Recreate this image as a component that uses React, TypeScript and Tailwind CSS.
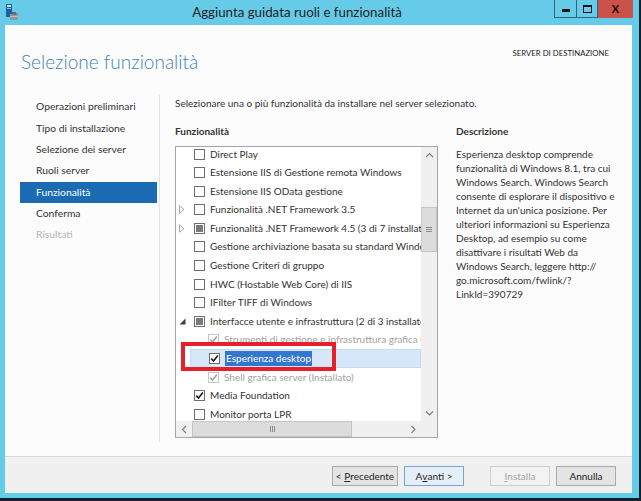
import React from "react";

type Row = {
  label: string;
  level: 0 | 1;
  state: "off" | "on" | "mixed";
  expander?: "closed" | "open";
  muted?: boolean;
  selected?: boolean;
};

const steps = [
  { label: "Operazioni preliminari" },
  { label: "Tipo di installazione" },
  { label: "Selezione dei server" },
  { label: "Ruoli server" },
  { label: "Funzionalità", active: true },
  { label: "Conferma" },
  { label: "Risultati", disabled: true },
];

const rows: Row[] = [
  { label: "Direct Play", level: 0, state: "off" },
  { label: "Estensione IIS di Gestione remota Windows", level: 0, state: "off" },
  { label: "Estensione IIS OData gestione", level: 0, state: "off" },
  { label: "Funzionalità .NET Framework 3.5", level: 0, state: "off", expander: "closed" },
  { label: "Funzionalità .NET Framework 4.5 (3 di 7 installato/i)", level: 0, state: "mixed", expander: "closed" },
  { label: "Gestione archiviazione basata su standard Windows", level: 0, state: "off" },
  { label: "Gestione Criteri di gruppo", level: 0, state: "off" },
  { label: "HWC (Hostable Web Core) di IIS", level: 0, state: "off" },
  { label: "IFilter TIFF di Windows", level: 0, state: "off" },
  { label: "Interfacce utente e infrastruttura (2 di 3 installato/i)", level: 0, state: "mixed", expander: "open" },
  { label: "Strumenti di gestione e infrastruttura grafica (Installato)", level: 1, state: "on", muted: true },
  { label: "Esperienza desktop", level: 1, state: "on", selected: true },
  { label: "Shell grafica server (Installato)", level: 1, state: "on", muted: true },
  { label: "Media Foundation", level: 0, state: "on" },
  { label: "Monitor porta LPR", level: 0, state: "off" },
];

const description = [
  "Esperienza desktop comprende",
  "funzionalità di Windows 8.1, tra cui",
  "Windows Search. Windows Search",
  "consente di esplorare il dispositivo e",
  "Internet da un'unica posizione. Per",
  "ulteriori informazioni su Esperienza",
  "Desktop, ad esempio su come",
  "disattivare i risultati Web da",
  "Windows Search, leggere http://",
  "go.microsoft.com/fwlink/?",
  "LinkId=390729",
];

function AppIcon() {
  return (
    <svg width="14" height="18" viewBox="0 0 14 18" className="shrink-0">
      <rect x="1" y="1" width="6" height="13" fill="#1f5fa6" />
      <rect x="2" y="2" width="4" height="2" fill="#cfe6f7" />
      <rect x="2" y="5" width="4" height="1" fill="#8fc1e8" />
      <path d="M7 10h6v7H5v-5h2z" fill="#7d8790" />
      <rect x="5" y="11" width="8" height="6" fill="#8e989f" />
      <rect x="7.5" y="9.5" width="3" height="1.5" fill="none" stroke="#5d666c" strokeWidth="1" />
      <rect x="5" y="13" width="8" height="1" fill="#b7bec3" />
    </svg>
  );
}

function TitleBar() {
  return (
    <div className="flex h-[25px] items-start">
      <div className="pl-[5px] pt-[3px] w-[40px]">
        <AppIcon />
      </div>
      <div className="flex-1 pt-[4px] text-center text-[13.3px] leading-[16px] text-[#1e1e1e]">
        Aggiunta guidata ruoli e funzionalità
      </div>
      <div className="flex h-[18px] mr-[6px]">
        <div className="flex w-[23px] items-end justify-center border border-t-0 border-[#2f6479] pb-[5px]">
          <div className="h-[3px] w-[8px] bg-[#111]" />
        </div>
        <div className="flex w-[21px] items-center justify-center border border-t-0 border-l-0 border-[#2f6479]">
          <div className="h-[8px] w-[9px] border border-t-[2.5px] border-[#111]" />
        </div>
        <div className="flex w-[35px] items-center justify-center bg-[#c9534b] text-[11px] font-bold text-[#1a0a08]">
          X
        </div>
      </div>
    </div>
  );
}

function CheckBox({ state, muted }: { state: Row["state"]; muted?: boolean }) {
  return (
    <div
      className={`relative flex h-[11px] w-[11px] shrink-0 items-center justify-center border bg-white ${
        muted ? "border-[#c4c4c4]" : "border-[#6e6e6e]"
      }`}
    >
      {state === "mixed" && <div className="h-[7px] w-[7px] bg-[#7a7a7a]" />}
      {state === "on" && (
        <svg width="9" height="9" viewBox="0 0 9 9">
          <path
            d="M1.2 4.6 L3.5 7 L7.9 1.4"
            fill="none"
            stroke={muted ? "#a3a3a3" : "#1b1b1b"}
            strokeWidth="1.6"
          />
        </svg>
      )}
    </div>
  );
}

function Expander({ kind }: { kind?: Row["expander"] }) {
  return (
    <div className="flex w-[18px] shrink-0 items-center pl-[3px]">
      {kind === "closed" && (
        <svg width="6" height="9" viewBox="0 0 6 9">
          <path d="M0.5 0.8 L5 4.5 L0.5 8.2 Z" fill="none" stroke="#a6a6a6" strokeWidth="1" />
        </svg>
      )}
      {kind === "open" && (
        <svg width="7" height="7" viewBox="0 0 7 7">
          <path d="M6.5 0.5 L6.5 6.5 L0.5 6.5 Z" fill="#3e3e3e" />
        </svg>
      )}
    </div>
  );
}

function TreeRow({ row }: { row: Row }) {
  return (
    <div className={`flex h-[18.6px] shrink-0 items-center whitespace-nowrap ${row.level === 1 ? "pl-[14px]" : ""}`}>
      <div
        className={`flex h-full flex-1 items-center ${
          row.selected ? "bg-[#d5e7f8] border border-[#c3dcf2]" : ""
        }`}
      >
        <Expander kind={row.expander} />
        <CheckBox state={row.state} muted={row.muted} />
        <span
          className={`ml-[5px] ${
            row.muted ? "text-[#a2a2a2]" : "text-[#333]"
          } ${row.selected ? "bg-[#3277cf] px-px text-white" : ""}`}
        >
          {row.label}
        </span>
      </div>
    </div>
  );
}

function ScrollArrow({ dir }: { dir: "up" | "down" | "left" | "right" }) {
  const d =
    dir === "up"
      ? "M1 5 L4.5 1.5 L8 5"
      : dir === "down"
      ? "M1 1.5 L4.5 5 L8 1.5"
      : dir === "left"
      ? "M5 1 L1.5 4.5 L5 8"
      : "M1.5 1 L5 4.5 L1.5 8";
  const horiz = dir === "up" || dir === "down";
  return (
    <div className="flex h-[16px] w-[16px] shrink-0 items-center justify-center">
      <svg width={horiz ? 9 : 7} height={horiz ? 7 : 9} viewBox={horiz ? "0 0 9 7" : "0 0 7 9"}>
        <path d={d} fill="none" stroke="#7b7b7b" strokeWidth="1.1" />
      </svg>
    </div>
  );
}

function FeatureList() {
  return (
    <div className="flex h-[292px] w-[263px] flex-col border border-[#a3a5aa] bg-white">
      <div className="flex h-[274px]">
        <div className="flex flex-1 flex-col overflow-hidden">
          <div className="-mt-[2.3px] flex flex-col">
            {rows.map((r) => (
              <TreeRow key={r.label} row={r} />
            ))}
          </div>
        </div>
        <div className="flex w-[16px] flex-col bg-[#f0f0f0]">
          <ScrollArrow dir="up" />
          <div className="h-[44px]" />
          <div className="flex h-[45px] items-center justify-center border border-[#c5c5c5] bg-[#dcdcdc]">
            <div className="flex flex-col gap-[1px]">
              <div className="h-px w-[6px] bg-[#8a8a8a]" />
              <div className="h-px w-[6px] bg-[#8a8a8a]" />
              <div className="h-px w-[6px] bg-[#8a8a8a]" />
            </div>
          </div>
          <div className="flex-1" />
          <ScrollArrow dir="down" />
        </div>
      </div>
      <div className="flex h-[16px] bg-[#f0f0f0]">
        <ScrollArrow dir="left" />
        <div className="flex w-[160px] items-center justify-center border border-[#c5c5c5] bg-[#dcdcdc]">
          <div className="flex gap-[1px]">
            <div className="h-[6px] w-px bg-[#8a8a8a]" />
            <div className="h-[6px] w-px bg-[#8a8a8a]" />
            <div className="h-[6px] w-px bg-[#8a8a8a]" />
          </div>
        </div>
        <div className="flex-1" />
        <ScrollArrow dir="right" />
        <div className="w-[16px] bg-[#f0f0f0]" />
      </div>
    </div>
  );
}

function WizButton({
  children,
  width,
  variant = "normal",
}: {
  children: React.ReactNode;
  width: string;
  variant?: "normal" | "default" | "disabled";
}) {
  const cls =
    variant === "default"
      ? "border-[#6fa6dc] bg-[#e6eff8] text-[#222]"
      : variant === "disabled"
      ? "border-[#cfcfcf] bg-[#f3f3f3] text-[#a3a3a3]"
      : "border-[#a9a9a9] bg-[#e4e4e4] text-[#222]";
  return (
    <div className={`flex h-[20px] items-center justify-center border text-[10px] ${width} ${cls}`}>
      {children}
    </div>
  );
}

export default function App() {
  return (
    <div className="relative h-[501px] w-[641px] overflow-hidden bg-[#10232c] font-['Lato','Noto_Sans',sans-serif] text-[10px] text-[#333]">
      <div className="flex h-[498px] w-[639px] flex-col bg-[#66cbe9]">
        <TitleBar />
        <div className="ml-[5px] mr-[7px] flex h-[468px] flex-col">
          <div className="flex flex-1 flex-col bg-[#fcfcfc]">
            <div className="flex h-[70px] items-start justify-between pl-[16px] pr-[23px]">
              <div className="pt-[25px] text-[19px] font-light leading-[24px] text-[#3f82b5]">
                Selezione funzionalità
              </div>
              <div className="pt-[23px] text-[7.8px] leading-[10px] text-[#222]">SERVER DI DESTINAZIONE</div>
            </div>
            <div className="flex flex-1">
              <nav className="mb-[14px] flex w-[155px] flex-col border-r border-[#e4e4e4] pl-[15px] pr-[2px] pt-[1.5px]">
                {steps.map((s) => (
                  <div
                    key={s.label}
                    className={`flex h-[21.3px] items-center pl-[16px] text-[10.3px] ${
                      s.active ? "bg-[#1a6bb3] text-white" : s.disabled ? "text-[#b4b4b4]" : "text-[#333]"
                    }`}
                  >
                    {s.label}
                  </div>
                ))}
              </nav>
              <div className="flex flex-1 flex-col pl-[15px]">
                <div className="h-[16px] leading-[16px]">
                  Selezionare una o più funzionalità da installare nel server selezionato.
                </div>
                <div className="mt-[12px] flex">
                  <div className="flex flex-col">
                    <div className="h-[16px] font-bold leading-[16px] text-[#333]">Funzionalità</div>
                    <div className="mt-[7px]">
                      <FeatureList />
                    </div>
                  </div>
                  <div className="ml-[18px] flex flex-col">
                    <div className="h-[16px] font-bold leading-[16px] text-[#333]">Descrizione</div>
                    <div className="mt-[8px] flex flex-col leading-[14px] text-[#333]">
                      {description.map((l) => (
                        <div key={l} className="whitespace-nowrap">
                          {l}
                        </div>
                      ))}
                    </div>
                  </div>
                </div>
              </div>
            </div>
          </div>
          <div className="flex h-[37px] items-start justify-end border-t border-[#d9d9d9] bg-[#f0f0f0] pr-[16px] pt-[9px]">
            <WizButton width="w-[66px]">
              &lt;&nbsp;<span className="underline">P</span>recedente
            </WizButton>
            <div className="ml-[6px]">
              <WizButton width="w-[60px]" variant="default">
                A<span className="underline">v</span>anti &gt;
              </WizButton>
            </div>
            <div className="ml-[26px]">
              <WizButton width="w-[60px]" variant="disabled">
                <span className="underline">I</span>nstalla
              </WizButton>
            </div>
            <div className="ml-[6px]">
              <WizButton width="w-[60px]">Annulla</WizButton>
            </div>
          </div>
        </div>
      </div>
      <div className="absolute left-[181px] top-[342px] h-[29px] w-[155px] border-4 border-[#e5202b]" />
    </div>
  );
}
